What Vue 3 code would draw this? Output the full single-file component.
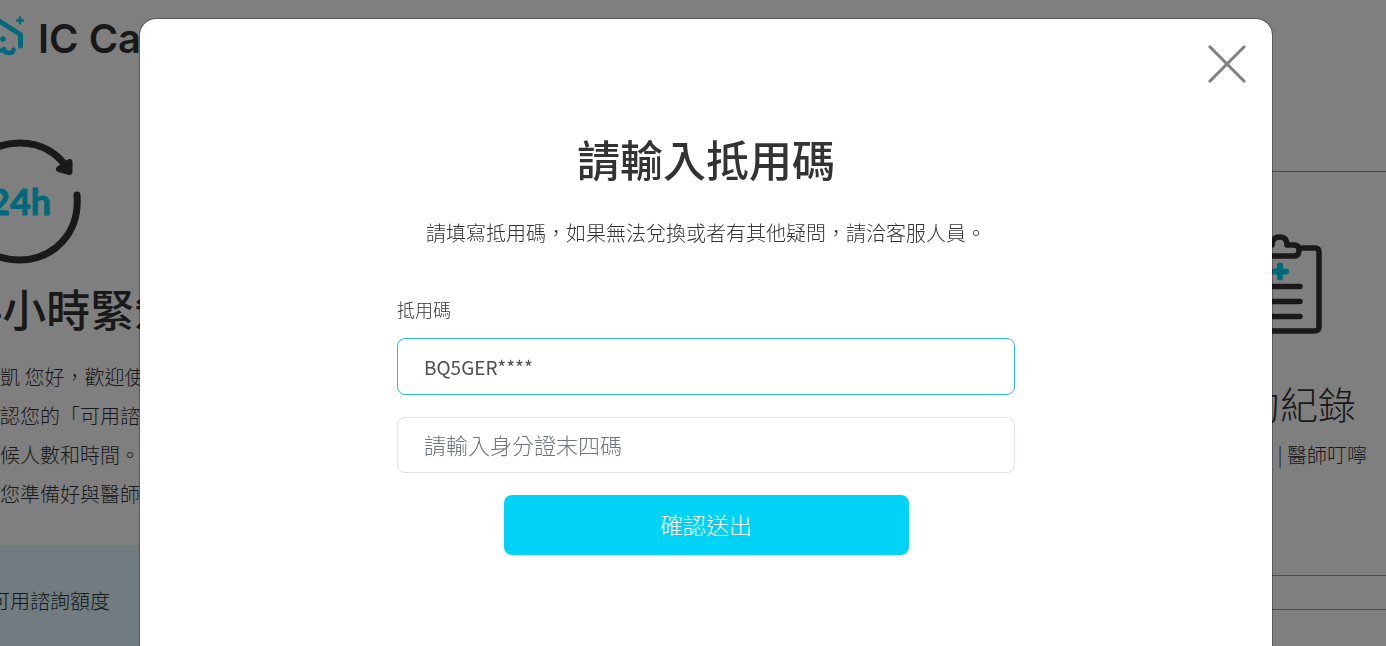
<script setup>
import { ref } from 'vue'

const open = ref(true)
const code = ref('BQ5GER****')
const idTail = ref('')
const greeting = ['凱 您好，歡迎使', '認您的「可用諮', '候人數和時間。', '您準備好與醫師']
</script>

<template>
  <div class="page">
    <div class="backdrop-page" :inert="open">
      <header class="brand">
        <svg class="brand-mark" width="26" height="48" viewBox="0 0 26 48" fill="none" stroke="#00d3f5" stroke-linecap="round" stroke-linejoin="round">
          <path d="M-4 7.500L0 10.500L20.500 23.500V35" stroke-width="5" />
          <path d="M20 6.500V12.500M17 9.500H23" stroke-width="2.400" />
          <path d="M-4 37Q0 42 4 38Q4 42 9 42Q13.500 42 13.500 38.500" stroke-width="4.500" />
          <circle cx="3" cy="28" r="2.800" fill="#00d3f5" stroke="none" />
        </svg>
        <span class="brand-name">IC Care</span>
      </header>

      <div class="columns">
        <section class="urgent">
          <svg width="90" height="140" viewBox="0 0 90 140">
            <g fill="none" stroke="#333" stroke-width="7" stroke-linecap="round" stroke-linejoin="round">
              <path d="M-10 19Q4 12 20 12C43 12 59 24 67 37" />
              <path d="M77 64C80 101 55 129 19 129Q7 129 -10 123" />
              <path d="M59 38L69.500 41L69.500 31Z" fill="#333" stroke-width="6" />
            </g>
            <text x="-11" y="84" class="hours">24h</text>
          </svg>
          <h2>24小時緊急</h2>
          <p><span v-for="line in greeting" :key="line">{{ line }}</span></p>
          <div class="quota">可用諮詢額度</div>
        </section>

        <section class="records">
          <div class="record-card">
            <svg width="92" height="104" viewBox="0 0 92 104" fill="none" stroke="#333" stroke-width="5.500" stroke-linecap="round" stroke-linejoin="round">
              <path d="M28 16H10Q6 16 6 20V95Q6 99 10 99H80Q85 99 85 95V20Q85 16 81 16H66" />
              <path d="M38 13Q38 5 46 5Q53 5 53 13H60Q65 13 65 18Q65 24 60 24H30Q25 24 25 18Q25 13 30 13H38" />
              <path d="M22 54.500H66M22 69.500H66M22 84.500H66" />
              <path d="M46 33.500V45.500M40 39.500H52" stroke="#00d3f5" stroke-width="6" />
            </svg>
            <h3>預約紀錄</h3>
            <p>看診紀錄 | 醫師叮嚀</p>
          </div>
          <div class="next-card"></div>
        </section>
      </div>
    </div>

    <div v-if="open" class="overlay">
      <div class="dialog" role="dialog" aria-modal="true" aria-labelledby="dialog-title">
        <button class="close" type="button" aria-label="關閉" @click="open = false">
          <svg width="38" height="38" viewBox="0 0 38 38"><path d="M1 1L37 37M37 1L1 37" stroke="#808080" stroke-width="3" /></svg>
        </button>
        <h1 id="dialog-title">請輸入抵用碼</h1>
        <p class="hint">請填寫抵用碼，如果無法兌換或者有其他疑問，請洽客服人員。</p>
        <form @submit.prevent>
          <label for="code">抵用碼</label>
          <input id="code" v-model="code" class="active" type="text" />
          <input v-model="idTail" type="text" aria-label="請輸入身分證末四碼" placeholder="請輸入身分證末四碼" />
          <button class="submit" type="submit">確認送出</button>
        </form>
      </div>
    </div>
  </div>
</template>

<style>
body {
  margin: 0;
  background: #fff;
}
</style>

<style scoped>
.page {
  height: 100vh;
  overflow: hidden;
  color: #333;
  font-family: "Noto Sans CJK TC", sans-serif;
  font-size: 20px;
  font-weight: 300;
}
h1, h2, h3, p {
  margin: 0;
}
svg {
  display: block;
}
.brand {
  display: flex;
  align-items: center;
  gap: 12px;
  height: 60px;
  padding-top: 10px;
  box-sizing: border-box;
}
.brand-name {
  padding-top: 8px;
  font-family: Inter, sans-serif;
  font-size: 40px;
  font-weight: 600;
  line-height: 40px;
}
.columns {
  display: flex;
  justify-content: space-between;
  padding-top: 71px;
}
.urgent {
  flex: 1;
}
.hours {
  fill: #00d3f5;
  stroke: #00d3f5;
  stroke-width: 1;
  stroke-linejoin: round;
  font-family: Lato, sans-serif;
  font-size: 36px;
  font-weight: 700;
}
.urgent h2 {
  margin-left: -48px;
  padding-top: 5px;
  font-size: 44px;
  font-weight: 500;
  line-height: 64px;
}
.urgent p {
  padding-top: 17px;
}
.urgent p span {
  display: block;
  line-height: 39px;
}
.quota {
  margin-top: 32px;
  margin-left: -10px;
  padding: 36px 0 48px;
  background: #e0f8ff;
  line-height: 40px;
}
.records {
  width: 212px;
  padding-top: 40px;
}
.record-card {
  display: flex;
  flex-direction: column;
  align-items: center;
  height: 405px;
  padding-top: 60px;
  box-sizing: border-box;
  border-top: 1px solid #00d3f5;
  border-bottom: 1px solid #00d3f5;
}
.record-card h3 {
  padding-top: 37px;
  font-size: 38px;
  font-weight: 300;
  line-height: 60px;
}
.record-card p {
  line-height: 44px;
}
.next-card {
  margin-top: 33px;
  border-top: 1px solid #00d3f5;
}
.overlay {
  position: fixed;
  inset: 0;
  overflow: hidden;
  padding: 18px 113px 0 139px;
  background: rgba(0, 0, 0, 0.5);
}
.dialog {
  position: relative;
  display: flex;
  flex-direction: column;
  align-items: center;
  padding: 109px 24px 120px;
  border: 1px solid rgba(0, 0, 0, 0.3);
  border-radius: 17px;
  background: #fff;
  background-clip: padding-box;
}
.close {
  position: absolute;
  top: 26px;
  right: 26px;
  padding: 0;
  border: 0;
  background: none;
  cursor: pointer;
}
h1 {
  font-size: 43px;
  font-weight: 500;
  line-height: 60px;
}
.hint {
  margin-top: 30px;
  line-height: 30px;
}
form {
  display: flex;
  flex-direction: column;
  gap: 22px;
  width: 100%;
  max-width: 618px;
  margin-top: 47px;
}
label {
  margin-bottom: -7px;
  font-size: 18px;
  line-height: 28px;
}
input {
  height: 56px;
  padding: 0 26px;
  box-sizing: border-box;
  border: 1px solid #dee2e6;
  border-radius: 8px;
  outline: 0;
  background: #fff;
  color: #495057;
  font-family: inherit;
  font-size: 19px;
  font-weight: 400;
}
input.active {
  height: 57px;
  border-color: #29bfd2;
}
input::placeholder {
  color: #6c757d;
  font-size: 22px;
  font-weight: 300;
  opacity: 1;
}
.submit {
  align-self: center;
  width: 100%;
  max-width: 405px;
  height: 60px;
  padding: 0 0 2px;
  border: 0;
  border-radius: 8px;
  background: #00d3f5;
  color: #fff;
  font-family: inherit;
  font-size: 23px;
  font-weight: 300;
  cursor: pointer;
}
</style>
